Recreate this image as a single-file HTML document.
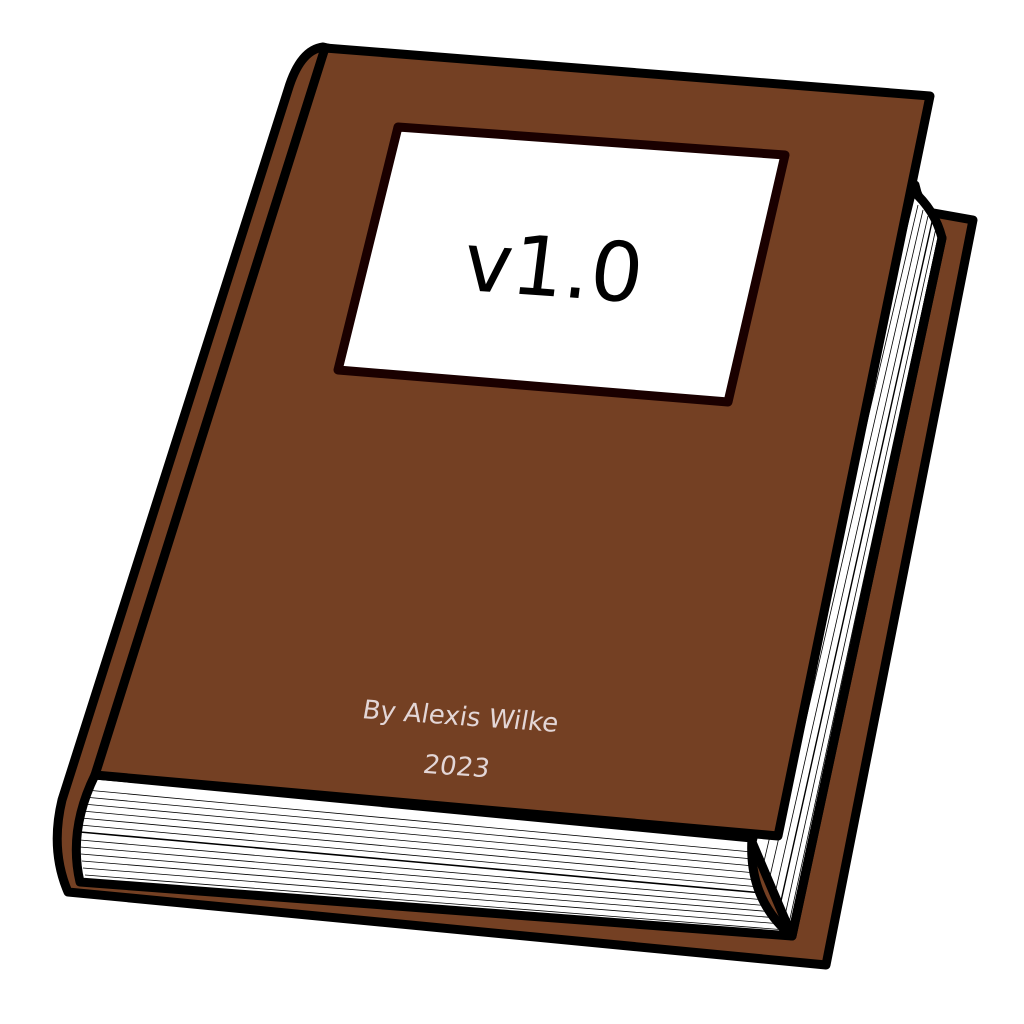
<!DOCTYPE html>
<html><head><meta charset="utf-8"><style>html,body{margin:0;padding:0;background:#fff;}svg{display:block}</style></head>
<body>
<svg width="1024" height="1024" viewBox="0 0 1024 1024" xmlns="http://www.w3.org/2000/svg">
<g stroke="#000" stroke-width="9" stroke-linejoin="round" stroke-linecap="round">
<path d="M323,47 Q300,50 288,90 L62,800 Q50,850 68,892 L826,965 L973,220 L928,212 Q918,200 915,185 Z" fill="#744023"/>
<path d="M912,190 Q935,210 942,238 L792,936 L752,842 Z" fill="#fff"/>
<path d="M95,775 L752,838 Q748,900 792,936 L80,882 Q68,830 95,775 Z" fill="#fff"/>
</g>
<g stroke="#000" stroke-width="0.8" fill="none">
<line x1="86" y1="790" x2="752" y2="852"/>
<line x1="84" y1="797" x2="753" y2="859"/>
<line x1="83" y1="804" x2="754" y2="866"/>
<line x1="82" y1="811" x2="756" y2="873"/>
<line x1="81" y1="818" x2="758" y2="880"/>
<line x1="80" y1="825" x2="760" y2="887"/>
<line x1="80" y1="832" x2="763" y2="893" stroke-width="1.6"/>
<line x1="80" y1="840" x2="766" y2="900"/>
<line x1="80" y1="847" x2="770" y2="906"/>
<line x1="81" y1="854" x2="774" y2="912"/>
<line x1="82" y1="861" x2="778" y2="918"/>
<line x1="83" y1="868" x2="782" y2="924"/>
<line x1="85" y1="875" x2="786" y2="930"/>
<line x1="918" y1="205" x2="762" y2="870"/>
<line x1="923" y1="210" x2="768" y2="885"/>
<line x1="928" y1="216" x2="774" y2="898"/>
<line x1="932" y1="222" x2="779" y2="910" stroke-width="1.4"/>
<line x1="936" y1="228" x2="784" y2="920"/>
<line x1="939" y1="233" x2="788" y2="928"/>
</g>
<g stroke="#000" stroke-width="9" stroke-linejoin="round" stroke-linecap="round">
<path d="M792,936 L942,238" fill="none"/>
<path d="M325,48 L930,96 L778,836 L95,775 Z" fill="#744023"/>
</g>
<path d="M398,127 L785,155 L728,402 L338,370 Z" fill="#fff" stroke="#1a0000" stroke-width="9" stroke-linejoin="round"/>
<g transform="translate(550,296) rotate(4) skewX(-3)">
<text x="0" y="0" text-anchor="middle" font-family="DejaVu Sans, sans-serif" font-size="82" fill="#000">v1.0</text>
</g>
<g transform="translate(459,725) rotate(4) skewX(-6)">
<text x="0" y="0" text-anchor="middle" font-family="DejaVu Sans, sans-serif" font-size="26" fill="#e3d6d6">By Alexis Wilke</text>
</g>
<g transform="translate(455,775) rotate(4) skewX(-6)">
<text x="0" y="0" text-anchor="middle" font-family="DejaVu Sans, sans-serif" font-size="26" fill="#e3d6d6">2023</text>
</g>
</svg>
</body></html>
